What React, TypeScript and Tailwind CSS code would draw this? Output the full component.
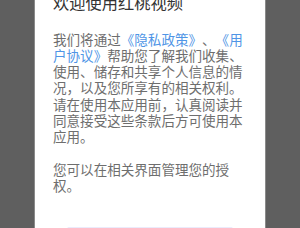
import React from 'react';

const cjk = { fontFamily: '"Noto Sans CJK SC", "Noto Sans", sans-serif' };

export default function App() {
  return (
    <div className="h-[228px] w-[300px] overflow-hidden bg-[#5f5f5f] flex justify-center [text-spacing-trim:space-all]" style={cjk}>
      {/* dialog, scrolled so the title sits above the window */}
      <div className="w-[230px] -mt-[8px] bg-white shadow-[0_0_0_1px_#8a8a8a] flex flex-col pl-[18px] pr-[18px] h-[400px]">
        <h1 className="text-[16.25px] leading-[20px] text-[#333333] font-normal whitespace-nowrap">欢迎使用红桃视频</h1>

        <div className="mt-[18.5px] text-[13.55px] leading-[16.25px] text-[#6e6e6e] whitespace-nowrap">
          <div>
            我们将通过<span className="text-[#4f95e6]">《隐私政策》</span>、<span className="text-[#4f95e6]">《用</span>
          </div>
          <div>
            <span className="text-[#4f95e6]">户协议》</span>帮助您了解我们收集、
          </div>
          <div>使用、储存和共享个人信息的情</div>
          <div>况，以及您所享有的相关权利。</div>
          <div>请在使用本应用前，认真阅读并</div>
          <div>同意接受这些条款后方可使用本</div>
          <div>应用。</div>
          <div className="h-[16.25px]"></div>
          <div>您可以在相关界面管理您的授</div>
          <div>权。</div>
        </div>

        <div className="mt-[34px] mx-auto w-[166px] h-[30px] border-t border-[#ebebfb] rounded-t-[2px]"></div>
      </div>
    </div>
  );
}
